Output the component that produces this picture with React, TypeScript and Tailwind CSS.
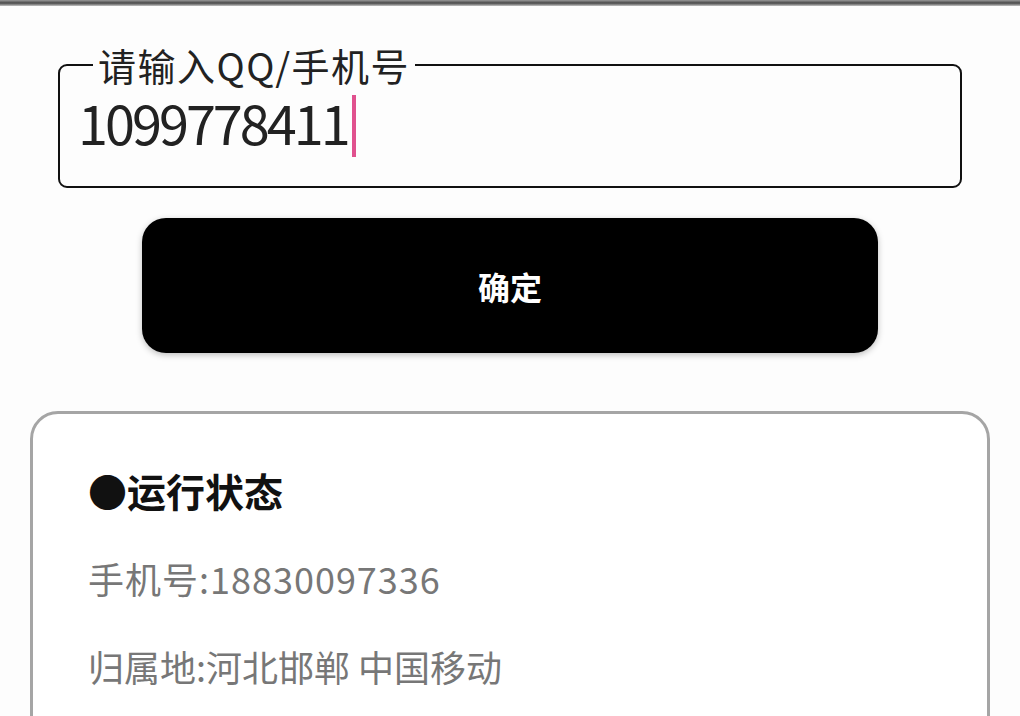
export default function App() {
  const font = { fontFamily: '"Noto Sans CJK SC", "Noto Sans", sans-serif' }

  return (
    <div className="min-h-[716px] w-[1020px] overflow-hidden bg-[#fdfdfd]" style={font}>
      {/* 顶部分隔条 */}
      <div className="h-[6px] bg-linear-to-b from-[#9a9a9a] via-[#4a4a4a] to-[#c4c4c4]" />

      {/* 输入框 */}
      <fieldset className="mx-[58px] mt-[40px] h-[142px] rounded-[9px] border-2 border-[#111]">
        <legend className="ml-[33px] px-[5px] text-[38px] leading-[38px] tracking-[1.5px] text-[#222]">
          请输入QQ/手机号
        </legend>
        <div className="flex items-center pl-[18px] pt-[6px]">
          <span className="text-[54px] leading-[64px] tracking-[-3px] text-[#222]">1099778411</span>
          <span className="ml-[4px] h-[62px] w-[4px] translate-y-[4px] bg-[#e0518e]" />
        </div>
      </fieldset>

      {/* 确定按钮 */}
      <button className="mx-[142px] mt-[30px] flex h-[135px] w-[736px] items-center justify-center rounded-[24px] bg-black shadow-[0_2px_6px_rgba(0,0,0,0.25)]">
        <span className="text-[32px] font-bold text-white">确定</span>
      </button>

      {/* 运行状态 */}
      <div className="mx-[30px] mt-[58px] h-[340px] rounded-[28px] border-[3px] border-[#a5a5a5] bg-white pl-[55px] pt-[52px]">
        <div className="flex flex-col gap-[40px]">
          <p className="text-[39px] font-bold leading-[48px] text-[#111]">●运行状态</p>
          <p className="text-[36px] leading-[48px] tracking-[1px] text-[#777]">手机号:18830097336</p>
          <p className="text-[36px] leading-[48px] text-[#777]">归属地:河北邯郸 中国移动</p>
        </div>
      </div>
    </div>
  )
}
